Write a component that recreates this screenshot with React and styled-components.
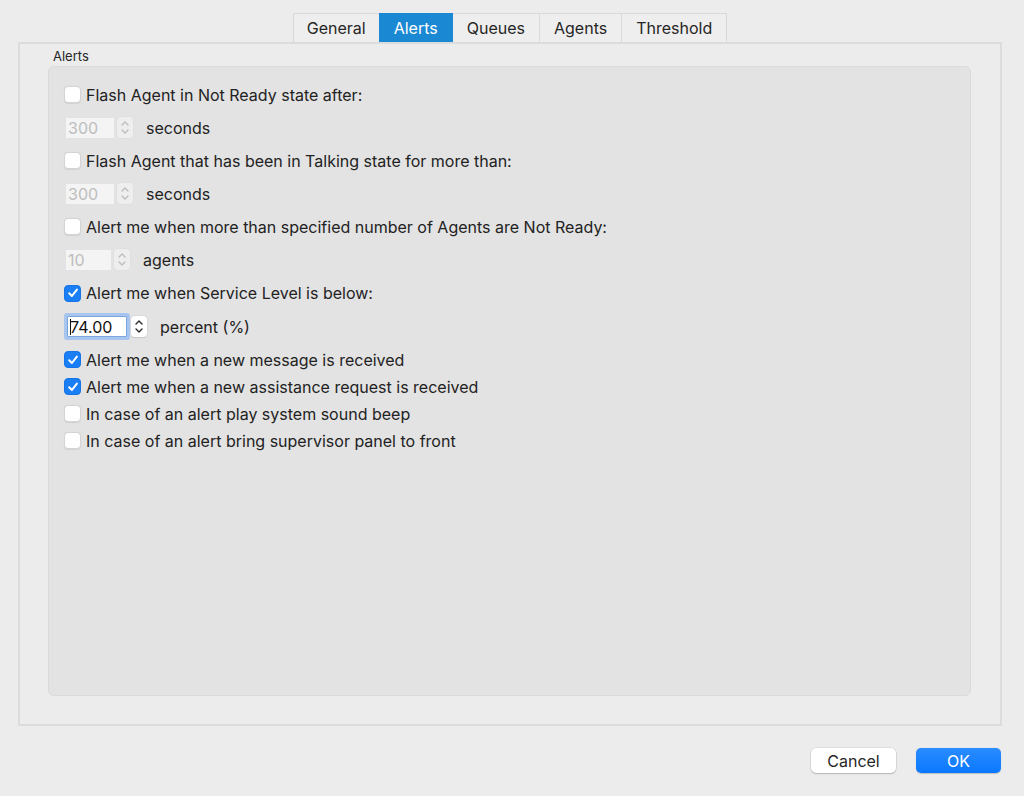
import React from "react";
import styled, { createGlobalStyle, css } from "styled-components";

const Global = createGlobalStyle`
  html, body { margin: 0; padding: 0; background: #ececec; }
  body { font-family: Inter, "Liberation Sans", sans-serif; color: #262626; }
`;

const Window = styled.div`
  width: 1024px;
  height: 796px;
  box-sizing: border-box;
  padding: 13px 22px 0 18px;
  display: flex;
  flex-direction: column;
  background: #ececec;
`;

const TabBar = styled.div`
  display: flex;
  justify-content: center;
  height: 29px;
  padding-left: 1px;
`;

const Tab = styled.div`
  box-sizing: border-box;
  height: 29px;
  padding: 0 ${(p) => p.$pad}px;
  display: flex;
  align-items: center;
  font-size: 16px;
  color: #262626;
  background: #eeeeee;
  border: 1px solid #d9d9d9;
  border-bottom: none;
  margin-left: -1px;
  ${(p) =>
    p.$active &&
    css`
      background: #1a88d3;
      border-color: #1a88d3;
      color: #ffffff;
      position: relative;
    `}
`;

const Pane = styled.div`
  box-sizing: border-box;
  height: 684px;
  border: 2px solid #dcdcdc;
  padding: 0 29px 28px 28px;
  display: flex;
  flex-direction: column;
  background: #ececec;
`;

const GroupLabel = styled.div`
  height: 21px;
  display: flex;
  align-items: center;
  padding: 1px 0 0 5px;
  font-size: 13px;
  color: #262626;
`;

const GroupBox = styled.div`
  flex: 1;
  box-sizing: border-box;
  background: #e3e3e3;
  border: 1px solid #dadada;
  border-radius: 6px;
  padding: 14px 15px 13px;
  display: flex;
  flex-direction: column;
`;

const CheckRow = styled.label`
  height: ${(p) => p.$h}px;
  display: flex;
  align-items: center;
  gap: 5px;
  font-size: 16px;
  color: #222;
`;

const Box = styled.span`
  box-sizing: border-box;
  width: 17px;
  height: 17px;
  border-radius: 4px;
  display: flex;
  align-items: center;
  justify-content: center;
  ${(p) =>
    p.$checked
      ? css`
          background: #1a7ef4;
          border: 1px solid #1674e6;
        `
      : css`
          background: #ffffff;
          border: 1px solid #d4d4d4;
          box-shadow: 0 0.5px 1px rgba(0, 0, 0, 0.08);
        `}
`;

const SpinRow = styled.div`
  height: 39px;
  display: flex;
  align-items: center;
  padding-left: ${(p) => (p.$focused ? "3px" : "2px")};
  font-size: 16px;
  color: #222;
`;

const NumField = styled.div`
  box-sizing: border-box;
  width: ${(p) => p.$w}px;
  height: 20px;
  display: flex;
  align-items: center;
  padding-left: 2px;
  font-size: 16px;
  ${(p) =>
    p.$focused
      ? css`
          height: 21px;
          background: #ffffff;
          color: #111;
          border: 1px solid #7aa6e0;
          box-shadow: 0 0 0 3px #a7c5ef;
          border-radius: 1px;
          margin-right: 4px;
        `
      : css`
          background: #f4f4f4;
          color: #bdbdbd;
          margin-right: 3px;
        `}
`;

const Caret = styled.span`
  display: inline-block;
  width: 1px;
  height: 16px;
  background: #111;
  margin-right: -1px;
`;

const Stepper = styled.div`
  box-sizing: border-box;
  width: 16px;
  height: 21px;
  border-radius: 4px;
  display: flex;
  flex-direction: column;
  align-items: center;
  justify-content: center;
  margin-right: 13px;
  ${(p) =>
    p.$enabled
      ? css`
          background: #ffffff;
          box-shadow: 0 0 0 0.5px #d0d0d0, 0 0.5px 1px rgba(0, 0, 0, 0.15);
        `
      : css`
          background: #eeeeee;
          box-shadow: 0 0 0 0.5px #dcdcdc;
        `}
`;

const Footer = styled.div`
  display: flex;
  justify-content: flex-end;
  gap: 20px;
  margin-top: 22px;
  padding-right: 1px;
`;

const Button = styled.button`
  box-sizing: border-box;
  width: 85px;
  height: 25px;
  border-radius: 5px;
  font-family: Inter, "Liberation Sans", sans-serif;
  font-size: 16px;
  display: flex;
  align-items: center;
  justify-content: center;
  padding: 0;
  ${(p) =>
    p.$primary
      ? css`
          background: linear-gradient(#2a8cff, #0a78ff);
          color: #ffffff;
          border: none;
          box-shadow: 0 0.5px 1px rgba(0, 0, 0, 0.2);
        `
      : css`
          background: #ffffff;
          color: #262626;
          border: none;
          box-shadow: 0 0 0 0.5px rgba(0, 0, 0, 0.12), 0 1px 1.5px rgba(0, 0, 0, 0.18);
        `}
`;

const Check = ({ checked }) => (
  <Box $checked={checked}>
    {checked && (
      <svg width="12" height="12" viewBox="0 0 12 12">
        <path
          d="M2.2 6.3 L4.9 9 L9.9 2.6"
          fill="none"
          stroke="#fff"
          strokeWidth="2"
          strokeLinecap="round"
          strokeLinejoin="round"
        />
      </svg>
    )}
  </Box>
);

const Chevrons = ({ enabled }) => {
  const c = enabled ? "#2a2a2a" : "#bdbdbd";
  return (
    <svg width="10" height="17" viewBox="0 0 10 17">
      <path d="M2 6 L5 3 L8 6" fill="none" stroke={c} strokeWidth="1.4" strokeLinecap="round" strokeLinejoin="round" />
      <path d="M2 11 L5 14 L8 11" fill="none" stroke={c} strokeWidth="1.4" strokeLinecap="round" strokeLinejoin="round" />
    </svg>
  );
};

const CheckItem = ({ checked, h = 27, children }) => (
  <CheckRow $h={h}>
    <Check checked={checked} />
    <span>{children}</span>
  </CheckRow>
);

const Spin = ({ value, unit, w, focused }) => (
  <SpinRow $focused={focused}>
    <NumField $w={w} $focused={focused}>
      {focused && <Caret />}
      {value}
    </NumField>
    <Stepper $enabled={focused}>
      <Chevrons enabled={focused} />
    </Stepper>
    <span>{unit}</span>
  </SpinRow>
);

const tabs = [
  { t: "General", pad: 13 },
  { t: "Alerts", pad: 14 },
  { t: "Queues", pad: 14 },
  { t: "Agents", pad: 14 },
  { t: "Threshold", pad: 14 },
];

export default function App() {
  return (
    <>
      <Global />
      <Window>
        <TabBar>
          {tabs.map(({ t, pad }) => (
            <Tab key={t} $pad={pad} $active={t === "Alerts"}>
              {t}
            </Tab>
          ))}
        </TabBar>
        <Pane>
          <GroupLabel>Alerts</GroupLabel>
          <GroupBox>
            <CheckItem>Flash Agent in Not Ready state after:</CheckItem>
            <Spin value="300" unit="seconds" w={48} />
            <CheckItem>Flash Agent that has been in Talking state for more than:</CheckItem>
            <Spin value="300" unit="seconds" w={48} />
            <CheckItem>Alert me when more than specified number of Agents are Not Ready:</CheckItem>
            <Spin value="10" unit="agents" w={45} />
            <CheckItem checked h={28}>Alert me when Service Level is below:</CheckItem>
            <Spin value="74.00" unit="percent (%)" w={60} focused />
            <CheckItem checked>Alert me when a new message is received</CheckItem>
            <CheckItem checked>Alert me when a new assistance request is received</CheckItem>
            <CheckItem>In case of an alert play system sound beep</CheckItem>
            <CheckItem>In case of an alert bring supervisor panel to front</CheckItem>
          </GroupBox>
        </Pane>
        <Footer>
          <Button>Cancel</Button>
          <Button $primary>OK</Button>
        </Footer>
      </Window>
    </>
  );
}
